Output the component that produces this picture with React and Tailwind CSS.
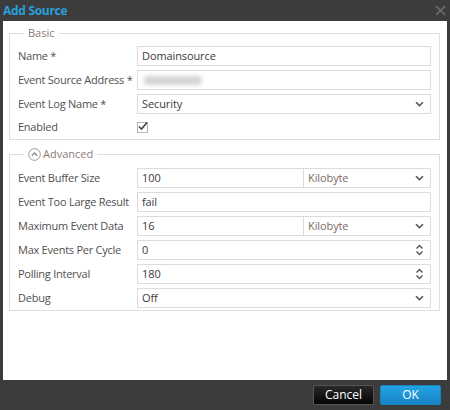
import React from 'react';

const font = { fontFamily: '"Open Sans", "Liberation Sans", sans-serif' };

function ChevronDown() {
  return (
    <svg width="9" height="6" viewBox="0 0 9 6" className="absolute right-[6px] top-1/2 -translate-y-1/2">
      <path d="M1 1.2 L4.5 4.6 L8 1.2" fill="none" stroke="#555" strokeWidth="1.6" />
    </svg>
  );
}

function Spinner() {
  return (
    <svg width="9" height="12" viewBox="0 0 9 12" className="absolute right-[6px] top-1/2 -translate-y-1/2">
      <path d="M1.5 4.5 L4.5 1.5 L7.5 4.5" fill="none" stroke="#555" strokeWidth="1.4" />
      <path d="M1.5 7.5 L4.5 10.5 L7.5 7.5" fill="none" stroke="#555" strokeWidth="1.4" />
    </svg>
  );
}

function Box({ children, className = '' }) {
  return (
    <div className={`relative h-[20px] border border-[#dcdcdc] bg-white pl-[4px] text-[11px] leading-[18px] tracking-[-0.1px] text-[#3a3a3a] ${className}`}>
      {children}
    </div>
  );
}

function Row({ label, children, className = 'h-[24px]' }) {
  return (
    <div className={`flex items-center ${className}`}>
      <div className="w-[119px] shrink-0 whitespace-nowrap text-[11px] tracking-[-0.25px] text-[#505050]">{label}</div>
      <div className="flex-1">{children}</div>
    </div>
  );
}

function Fieldset({ legend, children, className = '' }) {
  return (
    <fieldset className={`border border-[#dedede] pl-[8px] pr-[8px] ${className}`}>
      <legend className="ml-[6px] flex items-center px-[4px] text-[11px] leading-[14px] text-[#8a7b76]">{legend}</legend>
      {children}
    </fieldset>
  );
}

export default function App() {
  return (
    <div className="flex h-[410px] w-[450px] flex-col bg-[#3c3c3c]" style={font}>
      <div className="flex h-[21px] items-center justify-between pl-[3px] pr-[4px]">
        <span className="text-[12px] font-bold tracking-[-0.3px] text-[#27a0dc]">Add Source</span>
        <svg width="11" height="11" viewBox="0 0 11 11">
          <path d="M1 1 L10 10 M10 1 L1 10" stroke="#6f6f6f" strokeWidth="1.5" />
        </svg>
      </div>
      <div className="mx-[3px] flex-1 bg-white pl-[6px] pr-[7px] pt-[5px]">
        <Fieldset legend="Basic" className="pt-[4px] pb-[0px]">
          <Row label="Name *">
            <Box>Domainsource</Box>
          </Row>
          <Row label="Event Source Address *">
            <Box>
              <div className="absolute left-[6px] top-[5px] h-[9px] w-[58px] rounded-sm bg-[#d4d4d4] blur-[2px]" />
            </Box>
          </Row>
          <Row label="Event Log Name *">
            <Box>
              Security
              <ChevronDown />
            </Box>
          </Row>
          <Row label="Enabled" className="h-[23px]">
            <div className="relative h-[11px] w-[11px] border border-[#b5b5b5] bg-white">
              <svg width="11" height="11" viewBox="0 0 11 11" className="absolute -left-[1px] -top-[2px]">
                <path d="M2 5.5 L4.5 8 L10 1.5" fill="none" stroke="#444" strokeWidth="1.6" />
              </svg>
            </div>
          </Row>
        </Fieldset>
        <Fieldset
          className="mt-[7px] pt-[5px] pb-0"
          legend={
            <>
              <svg width="13" height="13" viewBox="0 0 13 13" className="mr-[2px]">
                <circle cx="6.5" cy="6.5" r="5.8" fill="none" stroke="#9a9a9a" strokeWidth="1" />
                <path d="M3.8 7.8 L6.5 5 L9.2 7.8" fill="none" stroke="#8a8a8a" strokeWidth="1.3" />
              </svg>
              Advanced
            </>
          }
        >
          <Row label="Event Buffer Size">
            <div className="flex">
              <Box className="flex-1">100</Box>
              <Box className="w-[127px] border-l-0 text-[#7a6a62]">
                Kilobyte
                <ChevronDown />
              </Box>
            </div>
          </Row>
          <Row label="Event Too Large Result">
            <Box>fail</Box>
          </Row>
          <Row label="Maximum Event Data">
            <div className="flex">
              <Box className="flex-1">16</Box>
              <Box className="w-[127px] border-l-0 text-[#7a6a62]">
                Kilobyte
                <ChevronDown />
              </Box>
            </div>
          </Row>
          <Row label="Max Events Per Cycle">
            <Box>
              0
              <Spinner />
            </Box>
          </Row>
          <Row label="Polling Interval">
            <Box>
              180
              <Spinner />
            </Box>
          </Row>
          <Row label="Debug">
            <Box>
              Off
              <ChevronDown />
            </Box>
          </Row>
        </Fieldset>
      </div>
      <div className="flex h-[30px] items-center justify-end gap-[6px] pr-[9px]">
        <button className="h-[20px] w-[61px] rounded-[2px] border border-[#555] bg-gradient-to-b from-[#2a2a2a] to-[#050505] text-[12px] leading-[18px] text-white">
          Cancel
        </button>
        <button className="h-[20px] w-[61px] rounded-[2px] border border-[#1a84c0] bg-gradient-to-b from-[#23a3e3] to-[#1784c6] text-[12px] leading-[18px] text-white">
          OK
        </button>
      </div>
    </div>
  );
}
